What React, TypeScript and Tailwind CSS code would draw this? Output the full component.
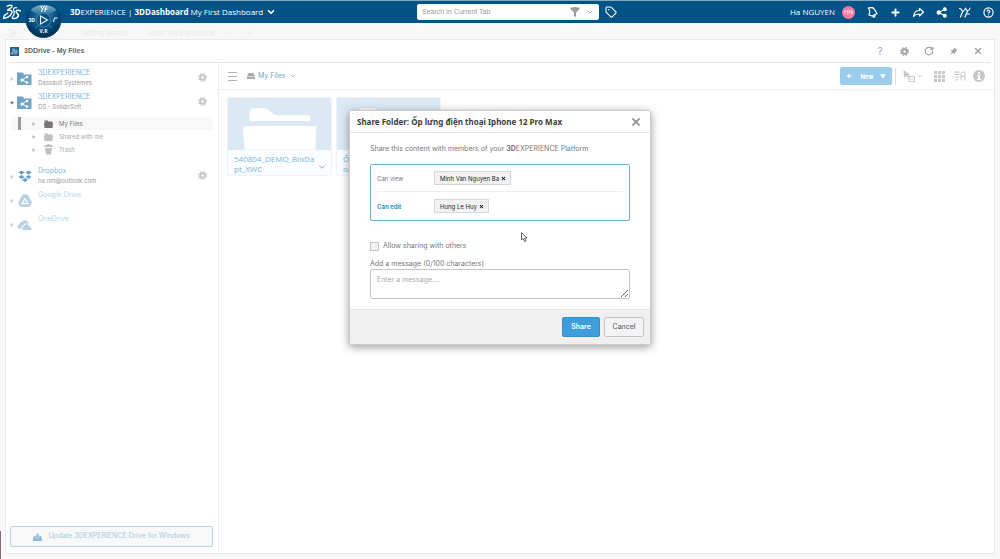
import React, { useState } from 'react';
import { ChevronDown, Plus, X, RotateCw, Tag, CircleHelp } from 'lucide-react';

const chrome = "font-['Open_Sans','Noto_Sans',sans-serif]";
const body = "font-['Inter','Liberation_Sans',sans-serif]";

function Logo({ className }: { className: string }) {
  return (
    <svg viewBox="0 0 34 30" className={className} fill="none" stroke="currentColor" strokeLinecap="round" strokeLinejoin="round">
      <path d="M8 4q6-3 9-1c1 3-4 6-8 8" strokeWidth="2.6" />
      <path d="M9 12c7-1 10 1 7 6-3 5-8 8-15 9 0-4 4-8 8-10" strokeWidth="2.6" />
      <path d="M26 7c-4-1-7 1-6 4 2 4 2 9-3 14" strokeWidth="2.2" />
      <path d="M33 13c-5-3-9-1-8 2 1 3 5 4 4 7-1 4-6 6-11 5" strokeWidth="2.8" />
    </svg>
  );
}

function Gear({ className }: { className: string }) {
  return (
    <svg viewBox="0 0 20 20" className={className} fill="none" stroke="currentColor">
      <circle cx="10" cy="10" r="5.2" strokeWidth="4.4" />
      <circle cx="10" cy="10" r="8.3" strokeWidth="3.2" strokeDasharray="3.6 2.92" />
    </svg>
  );
}

function Nodes({ className }: { className: string }) {
  return (
    <svg viewBox="0 0 20 20" className={className} fill="currentColor" stroke="currentColor" strokeWidth="2">
      <path d="M16 4 5 10l11 6" fill="none" />
      <circle cx="16" cy="4" r="2.6" />
      <circle cx="5" cy="10" r="3" />
      <circle cx="16" cy="16" r="2.6" />
    </svg>
  );
}

function Triangle({ open = false, className = '' }: { open?: boolean; className?: string }) {
  return (
    <svg viewBox="0 0 10 10" className={className} fill="currentColor">
      {open ? <path d="M0 2h10L5 9z" /> : <path d="M1 0v10l8-5z" />}
    </svg>
  );
}

function Compass() {
  return (
    <svg viewBox="0 0 36 38" className="h-[38px] w-[37px]">
      <defs>
        <radialGradient id="globe" cx="50%" cy="35%" r="65%">
          <stop offset="0" stopColor="#3483ae" />
          <stop offset="0.55" stopColor="#075283" />
          <stop offset="1" stopColor="#032b49" />
        </radialGradient>
        <linearGradient id="gloss" x1="0" y1="0" x2="0" y2="1">
          <stop offset="0" stopColor="#7fb0cb" />
          <stop offset="1" stopColor="#256f9c" />
        </linearGradient>
      </defs>
      <circle cx="18" cy="19" r="17.5" fill="url(#globe)" stroke="#074772" />
      <path d="M5 9a17 14 0 0 1 26 0l-8 5q-5-4-10 0z" fill="url(#gloss)" />
      <circle cx="18" cy="19" r="7" fill="#0d4f7e" stroke="#3c83ae" />
      <path d="m15 15 7 4-7 4z" fill="none" stroke="#e5f2f9" strokeWidth="1.1" />
      <path d="m10 27 3-3m13 3-3-3" stroke="#4c8fb7" />
      <g fill="#fff" fontFamily="Open Sans" fontWeight="bold" fontSize="5">
        <text x="3" y="21">3D</text>
        <text x="14" y="32">V,R</text>
      </g>
      <path d="m15 5 2 3 2-3m-2 3-1 3m5-6-2 6m0-3h3M29 17h3m-3 0-1 4" fill="none" stroke="#fff" strokeWidth="1" />
    </svg>
  );
}

function TopBar() {
  return (
    <header className={`relative z-10 flex h-[23px] items-center border-t border-[#7fa9c3] bg-[#005386] text-white ${chrome}`}>
      <div className="flex flex-1 items-center">
        <Logo className="ml-[3px] h-4 w-[18px]" />
        <button aria-label="Compass" className="absolute top-0 left-[25px]"><Compass /></button>
        <div className="ml-[49px] flex items-center whitespace-nowrap text-[8px]">
          <span><b>3D</b>EXPERIENCE | <b>3DDashboard</b></span>
          <button className="ml-0.5 flex items-center gap-[3px]">My First Dashboard <ChevronDown className="size-2.5" strokeWidth={4} /></button>
        </div>
      </div>
      <div className="ml-10 flex items-center">
        <div className="flex h-4 w-[182px] items-center rounded-xs bg-white px-[5px] text-[#aaa]">
          <input aria-label="Search" placeholder="Search In Current Tab" className="min-w-0 flex-1 font-['Liberation_Sans',sans-serif] text-[7px] outline-none placeholder:text-[#999]" />
          <svg viewBox="0 0 20 20" className="mr-1.5 size-2.5" fill="#999"><ellipse cx="10" cy="3" rx="9" ry="3" /><path d="M1 4q9 5 18 0l-7 7v9l-4-2v-7z" /></svg>
          <ChevronDown className="size-2" strokeWidth={3} />
        </div>
        <button aria-label="Tags" className="ml-1.5"><Tag className="size-3" strokeWidth={2.2} /></button>
      </div>
      <div className="flex flex-1 items-center justify-end pr-1.5">
        <span className="text-[8px]">Ha NGUYEN</span>
        <span className="ml-[7px] flex size-[13px] items-center justify-center rounded-full bg-[#fd78a5] text-[6px]">HN</span>
        <div className="ml-3 flex items-center gap-3">
          <button aria-label="Notifications">
            <svg viewBox="0 0 22 22" className="size-[11px]" fill="none" stroke="currentColor" strokeWidth="2.6" strokeLinejoin="round"><path d="M3 2q9-3 12 3l5 8-10 5-6-2q3-7-1-14z" /><path d="m11 18 3 3 3-5" /></svg>
          </button>
          <button aria-label="Add"><Plus className="size-[11px]" strokeWidth={4} /></button>
          <button aria-label="Share">
            <svg viewBox="0 0 22 22" className="size-[11px]" fill="none" stroke="currentColor" strokeWidth="2.4" strokeLinejoin="round"><path d="M13 3v4C6 7 2 11 1 19c3-4 7-5 12-5v4l8-8z" /></svg>
          </button>
          <button aria-label="Collaborate"><Nodes className="size-[11px]" /></button>
          <button aria-label="Communities">
            <svg viewBox="0 0 24 22" className="h-[11px] w-3" fill="none" stroke="currentColor" strokeWidth="2.4" strokeLinecap="round"><path d="M1 3q4 0 6 6m6-7q-1 5-6 8L3 20M14 4l3 4q4-1 5-6m-5 6-5 12m3-6h6" /></svg>
          </button>
          <button aria-label="Help"><CircleHelp className="size-[11px]" strokeWidth={2.6} /></button>
        </div>
      </div>
    </header>
  );
}

function Platform({ name, sub, icon, open, gear = true, dim = false }: { name: string; sub?: string; icon: React.ReactNode; open?: boolean; gear?: boolean; dim?: boolean }) {
  return (
    <div className="flex h-[24px] items-start pl-1">
      <Triangle open={open} className={`mt-[9px] size-1 ${open ? 'text-[#666]' : 'text-[#c8c8c8]'}`} />
      <span className={`mt-1 ml-[3px] flex h-[13px] w-[15px] items-center justify-center ${dim ? 'opacity-50' : ''}`}>{icon}</span>
      <div className="ml-1.5 flex-1">
        <a href="#" className={`block text-[7px] leading-[10px] ${dim ? 'text-[#b3d6ec]' : 'text-[#7ab8dd]'}`}>{name}</a>
        {sub && <p className="text-[6px] leading-[10px] text-[#999]">{sub}</p>}
      </div>
      {gear && <button aria-label={`${name} settings`} className="mt-[5px] mr-[11px] text-[#c8c8c8]"><Gear className="size-[9px]" /></button>}
    </div>
  );
}

function PlatformIcon() {
  return (
    <svg viewBox="0 0 30 26" className="h-[13px] w-[15px]">
      <path d="M0 1h11l3 4h15v21H0z" fill="#73a3c4" />
      <path d="m20 10-10 6 10 5" fill="none" stroke="#fff" strokeWidth="2" />
      <g fill="#fff"><circle cx="20" cy="10" r="2.6" /><circle cx="10" cy="16" r="3.2" /><circle cx="20" cy="21" r="2.6" /></g>
    </svg>
  );
}

function SmallFolder() {
  return <svg viewBox="0 0 18 16" className="h-2 w-[9px]" fill="currentColor"><path d="M1 1h6l2 2h8v3H1zM0 6h18l-1 10H1z" /></svg>;
}

function Sidebar() {
  const rows = [
    { label: 'My Files', icon: <SmallFolder /> },
    { label: 'Shared with me', icon: <SmallFolder /> },
    {
      label: 'Trash',
      icon: <svg viewBox="0 0 18 22" className="h-[11px] w-[9px]" fill="currentColor"><path d="M5 2q4-4 8 0h4v4H1V2zM2 8h14l-2 13H4z" /></svg>,
    },
  ];
  return (
    <aside className="flex w-[213px] shrink-0 flex-col border-r border-[#ededed] pt-[5px]">
      <Platform name="3DEXPERIENCE" sub="Dassault Systèmes" icon={<PlatformIcon />} />
      <Platform name="3DEXPERIENCE" sub="DS - SolidnSoft" icon={<PlatformIcon />} open />
      <ul className="mr-[5px] ml-[5px] pt-px text-[6px]">
        {rows.map((row, i) => (
          <li key={row.label} className={`flex h-[13px] items-center ${i === 0 ? 'bg-[#f8f8f8] text-[#777]' : 'text-[#aaa]'}`}>
            <span className={`ml-[7px] h-full w-[3px] ${i === 0 ? 'bg-[#999]' : ''}`} />
            <Triangle className="ml-[11px] size-1 text-[#bbb]" />
            <span className={`ml-2 flex w-[9px] justify-center ${i === 0 ? '' : 'text-[#c0c0c0]'}`}>{row.icon}</span>
            <a href="#" className="ml-1.5">{row.label}</a>
          </li>
        ))}
      </ul>
      <div className="pt-2.5">
        <Platform
          name="Dropbox"
          sub="ha.nm@outlook.com"
          icon={<svg viewBox="0 0 28 26" className="h-[13px] w-3.5" fill="#5f9cc6"><path d="m7 1 6 4-6 4-6-4zM21 1l6 4-6 4-6-4zM7 10l6 4-6 4-6-4zM21 10l6 4-6 4-6-4zM8 20l6-4 6 4-6 4z" /></svg>}
        />
        <Platform
          name="Google Drive"
          gear={false}
          dim
          icon={<svg viewBox="0 0 28 26" className="h-[13px] w-3.5"><path d="M9 1h10l9 16-5 9H5l-5-9z" fill="#73a3c4" /><path d="m14 9-6 10h12z" fill="none" stroke="#fff" strokeWidth="2.5" /></svg>}
        />
        <Platform
          name="OneDrive"
          gear={false}
          dim
          icon={<svg viewBox="0 0 32 22" className="h-2.5 w-[15px]" fill="#73a3c4"><path d="M1 18q-2-6 4-8 0-6 7-6Q16-2 22 3q4 1 3 6-8-5-12 3-6 1-5 8z" /><path d="M12 22q-4-5 3-8 2-6 8-4 3 1 3 4 6 1 5 8z" /></svg>}
        />
      </div>
      <button className="mt-auto mr-[5px] mb-1.5 ml-1 flex h-[21px] items-center justify-center gap-1.5 rounded-xs border border-[#b7d3e4] bg-[#f8f8f8] text-[7px] text-[#9ccae6]">
        <svg viewBox="0 0 20 18" className="h-2 w-[9px]" fill="#8db9d4"><path d="M5 6h3V1h4v5h3l-5 5zM2 7h2l6 6 6-6h2l2 6v5H0v-5z" /></svg>
        Update 3DEXPERIENCE Drive for Windows
      </button>
    </aside>
  );
}

function FolderCard({ name }: { name: string }) {
  return (
    <article className="relative h-[79px] w-[105px] rounded-xs border border-[#ecf3f9] bg-[#dce9f4]">
      <svg viewBox="0 0 105 52" className="block h-[52px] w-full" fill="#fff">
        <path d="M22 23V14q0-4 4-4h11q3 0 6 3 4 4 7 4h30q4 0 4 4v2zM18 28h69q3 0 3 3l-1 21H17l-2-21q0-3 3-3z" />
      </svg>
      <div className={`h-[25px] bg-[#fbfdff] px-1.5 pt-1 text-[8px] leading-[10px] text-[#7ab6dc] ${chrome}`}>
        <p className="w-[84px] break-all whitespace-pre-line">{name}</p>
      </div>
      <ChevronDown className="absolute right-1 bottom-[3px] size-2.5 text-[#999]" />
    </article>
  );
}

function DrivePanel() {
  return (
    <main className={`mx-[5px] mb-[5px] flex flex-1 flex-col border border-[#e9e9e9] bg-white ${body}`}>
      <div className="mx-1 flex h-[23px] items-center border-b border-[#e5e5e5]">
        <span className="flex size-[9px] items-center justify-center bg-[#1d6797] text-white"><Logo className="size-[7px]" /></span>
        <h1 className="ml-[5px] flex-1 font-['Liberation_Sans',sans-serif] text-[7px] font-bold text-[#666]">3DDrive - My Files</h1>
        <div className="flex items-center gap-[15px] pr-[7px] text-[#a3a3a3]">
          <button aria-label="Help" className="w-2.5 text-[10px] leading-none">?</button>
          <button aria-label="Preferences"><Gear className="size-[9px]" /></button>
          <button aria-label="Refresh"><RotateCw className="size-2.5" strokeWidth={3} /></button>
          <button aria-label="Pin"><svg viewBox="0 0 20 20" className="size-[9px]" fill="currentColor"><path d="m12 1 7 7-3 1-3 4v4l-4-4-8 6 6-8-4-4h5l3-3z" /></svg></button>
          <button aria-label="Close"><X className="size-2.5" strokeWidth={3.4} /></button>
        </div>
      </div>
      <div className="flex flex-1">
        <Sidebar />
        <section className="flex-1">
          <div className="flex h-[27px] items-center border-b border-[#f1f1f1] pr-[9px] pl-[9px]">
            <button aria-label="Menu"><svg viewBox="0 0 18 18" className="size-[9px]" stroke="#b5b5b5" strokeWidth="2"><path d="M0 1h18M0 9h18M0 17h18" /></svg></button>
            <button className="ml-2.5 flex items-center gap-[3px] text-[7px] text-[#6fa9cc]">
              <svg viewBox="0 0 16 12" className="h-1.5 w-2" fill="#aaa"><path d="M3 0h10l3 7H0zM0 8h16v4H0z" /></svg>
              My Files
              <ChevronDown className="size-2 text-[#999]" />
            </button>
            <button className="ml-auto flex h-[18px] w-[52px] items-center justify-between rounded-xs bg-[#9acced] px-1.5 text-[6px] font-bold text-white">
              <Plus className="size-1.5" strokeWidth={5} />
              <span className="pl-0.5">New</span>
              <Triangle open className="size-1.5" />
            </button>
            <div className="ml-[3px] flex h-[17px] items-center border-l border-[#ddd] pl-[7px] text-[#c8c8c8]">
              <button aria-label="Selection" className="flex items-center">
                <svg viewBox="0 0 26 24" className="h-3 w-[13px]"><path d="m1 0 14 10-5 1 3 6-2 1-4-6-5 4z" fill="currentColor" /><path d="M12 13h11v10H12zM14 17l3 3 5-5" fill="none" stroke="currentColor" strokeWidth="2" /></svg>
                <ChevronDown className="size-2" strokeWidth={3} />
              </button>
              <button aria-label="Grid view" className="ml-2.5"><svg viewBox="0 0 22 22" className="size-[11px]" fill="currentColor"><path d="M0 0h6v6H0zM8 0h6v6H8zM16 0h6v6h-6zM0 8h6v6H0zM8 8h6v6H8zM16 8h6v6h-6zM0 16h6v6H0zM8 16h6v6H8zM16 16h6v6h-6z" /></svg></button>
              <button aria-label="Sort" className="ml-[9px]"><svg viewBox="0 0 24 20" className="h-2.5 w-3" fill="none" stroke="currentColor" strokeWidth="2"><path d="M0 2h12M1 7h10M1 12h10M3 16l3 3 3-3M14 19V5q0-3 4-3t4 3v14m-8-8h8" /></svg></button>
              <button aria-label="Information" className="ml-[7px]"><svg viewBox="0 0 24 24" className="size-3"><circle cx="12" cy="12" r="12" fill="currentColor" /><path d="M10 4h4v4h-4zM8 10h6v8h2v2H8v-2h2v-6H8z" fill="#fff" /></svg></button>
            </div>
          </div>
          <div className="flex gap-1 px-2 pt-[7px]">
            <FolderCard name="540804_DEMO_BioDapt_XWC" />
            <FolderCard name={'Ốp lưng điện th\noại Iphone 12'} />
          </div>
        </section>
      </div>
    </main>
  );
}

function Person({ name, onRemove }: { name: string; onRemove: () => void }) {
  return (
    <span className="flex h-[14px] items-center gap-[2px] border border-[#d5d8dd] bg-[#f1f2f4] pr-1 pl-[5px] text-[6px] text-[#222]">
      {name}
      <button type="button" aria-label={`Remove ${name}`} onClick={onRemove}><X className="size-[5px]" strokeWidth={5} /></button>
    </span>
  );
}

function ShareDialog() {
  const [viewers, setViewers] = useState<string[]>(['Minh Van Nguyen Ba']);
  const [editors, setEditors] = useState<string[]>(['Hung Le Huy']);
  const [message, setMessage] = useState<string>('');

  return (
    <div className={`absolute inset-0 z-20 flex items-start justify-center pt-[110px] text-[7px] text-[#777] ${body}`}>
      <form role="dialog" aria-labelledby="share-title" className="w-[302px] rounded-xs border border-[#ccc] bg-white shadow-[0_2px_8px_rgba(0,0,0,0.4)]" onSubmit={(e) => e.preventDefault()}>
        <div className="flex h-[22px] items-center justify-between border-b border-[#e5e5e5] pr-2 pl-[7px]">
          <h2 id="share-title" className="font-['Noto_Sans',sans-serif] text-[8px] font-bold text-[#3d3d3d]">Share Folder: Ốp lưng điện thoại Iphone 12 Pro Max</h2>
          <button type="button" aria-label="Close dialog"><X className="size-3 text-[#999]" strokeWidth={3.6} /></button>
        </div>
        <div className="px-5 py-2.5">
          <p className="leading-[12px]">Share this content with members of your <b>3D</b>EXPERIENCE Platform</p>
          <div className="mt-[9px] rounded-xs border border-[#6bb0cf] px-1.5 text-[6px]">
            <div className="flex h-[27px] items-center border-b border-[#eee]">
              <span className="w-[57px]">Can view</span>
              {viewers.map((v) => <Person key={v} name={v} onRemove={() => setViewers(viewers.filter((x) => x !== v))} />)}
            </div>
            <div className="flex h-[28px] items-center">
              <span className="w-[57px] font-bold text-[#3b96cb]">Can edit</span>
              {editors.map((v) => <Person key={v} name={v} onRemove={() => setEditors(editors.filter((x) => x !== v))} />)}
            </div>
          </div>
          <label className="mt-5 flex items-center gap-1 leading-[10px]">
            <input type="checkbox" className="size-[9px] appearance-none border border-[#c4c4c4] bg-[#f2f2f2] checked:bg-[#3d9ddd]" />
            Allow sharing with others
          </label>
          <label htmlFor="message" className="mt-2 block leading-[10px]">Add a message ({message.length}/100 characters)</label>
          <textarea
            id="message"
            value={message}
            maxLength={100}
            onChange={(e) => setMessage(e.target.value)}
            placeholder="Enter a message..."
            className="block h-[30px] w-full rounded-xs border border-[#c4c4c4] px-1.5 py-[5px] leading-[10px] placeholder:text-[#aaa]"
          />
        </div>
        <div className="flex h-[35px] items-center justify-end gap-1 border-t border-[#e5e5e5] bg-[#f0f0f0] pr-1.5">
          <button type="submit" className="h-5 w-[38px] rounded-xs border border-[#318fcb] bg-[#3d9ddd] font-semibold text-white">Share</button>
          <button type="button" className="h-5 w-10 rounded-xs border border-[#c4c4c4] bg-[#f3f3f3] text-[#555]">Cancel</button>
        </div>
      </form>
    </div>
  );
}

export default function App() {
  return (
    <div className="relative flex min-h-screen flex-col bg-[#f8f8f8]">
      <TopBar />
      <nav className="flex h-4 items-center pt-1 pl-[7px] font-['Liberation_Sans',sans-serif] text-[7px] text-[#e9e9e9]">
        <svg viewBox="0 0 20 16" className="h-2 w-2.5" fill="none" stroke="currentColor" strokeWidth="2"><path d="M1 2h12v12H1m4-6h14m-4-4 4 4-4 4" /></svg>
        <a href="#" className="ml-16">Getting Started</a>
        <a href="#" className="ml-5">Learn the Experience</a>
        <ChevronDown className="ml-2 size-2" />
        <Plus className="ml-3.5 size-2" />
      </nav>
      <DrivePanel />
      <span className="absolute bottom-0 left-0 h-7 w-px bg-[#8b6a6e]" />
      <ShareDialog />
      {/* mouse pointer */}
      <svg viewBox="0 0 12 20" className="absolute top-[232px] left-[521px] z-30 h-2.5 w-1.5" fill="#fff" stroke="#444" strokeWidth="1.6"><path d="M1 1v15l3-3 3 6 3-1-3-6h5z" /></svg>
    </div>
  );
}
